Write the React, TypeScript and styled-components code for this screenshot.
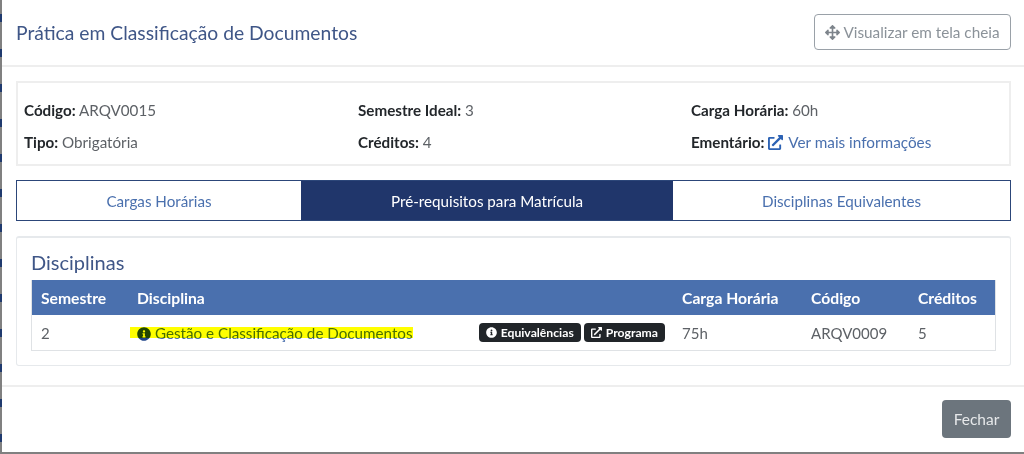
import React from "react";
import styled, { createGlobalStyle } from "styled-components";
import { FaArrowsAlt, FaExternalLinkAlt, FaInfoCircle } from "react-icons/fa";

const Global = createGlobalStyle`
  html, body { margin: 0; padding: 0; overflow: hidden; }
  body { font-family: "Lato", "Open Sans", sans-serif; }
  * { box-sizing: border-box; }
`;

const Page = styled.div`
  width: 1024px;
  height: 454px;
  padding: 0 0 2px 2px;
  background: repeating-linear-gradient(180deg, #808080 0 14px, #1f3a6e 14px 22px, #808080 22px 35px);
`;

const Modal = styled.div`
  height: 452px;
  background: #fff;
  display: flex;
  flex-direction: column;
`;

const Header = styled.header`
  height: 67px;
  padding: 14px 13px 0 14px;
  border-bottom: 2px solid #eeeeee;
  display: flex;
  justify-content: space-between;
  align-items: flex-start;
`;

const Title = styled.h1`
  margin: 0;
  padding-top: 6px;
  font-size: 19.3px;
  line-height: 26px;
  font-weight: 400;
  color: #3f5687;
`;

const OutlineButton = styled.button`
  width: 197px;
  height: 36px;
  display: flex;
  align-items: center;
  justify-content: center;
  gap: 3px;
  background: #fff;
  border: 1px solid #9aa1a8;
  border-radius: 4px;
  font: 400 15.3px "Lato", sans-serif;
  color: #8b9299;
  padding: 0;
  svg { width: 15px; height: 15px; color: #7d848b; }
`;

const Body = styled.div`
  padding: 14px 13px 0 14px;
  display: flex;
  flex-direction: column;
`;

const InfoCard = styled.section`
  height: 85px;
  border: 2px solid #eeeeee;
  padding: 11px 6px 0;
  display: grid;
  grid-template-columns: 334px 333px 1fr;
  grid-auto-rows: 32px;
  align-items: center;
`;

const Field = styled.div`
  font-size: 15.2px;
  color: #5d6166;
  white-space: nowrap;
  b { color: #23272b; font-weight: 700; }
`;

const InfoLink = styled.a`
  color: #4a70ae;
  font-size: 15.3px;
  svg { width: 15px; height: 15px; vertical-align: -2px; color: #2c62b4; margin-right: 5px; }
`;

const Tabs = styled.nav`
  margin-top: 14px;
  height: 41px;
  display: grid;
  grid-template-columns: 284px 372px 1fr;
  border: 1px solid #2c4679;
`;

const Tab = styled.div<{ $active?: boolean }>`
  display: flex;
  align-items: center;
  justify-content: center;
  font-size: 15.2px;
  color: ${(p) => (p.$active ? "#fff" : "#4a70ae")};
  background: ${(p) => (p.$active ? "#20366b" : "#fff")};
`;

const Panel = styled.section`
  margin-top: 15px;
  height: 130px;
  border: 1px solid #e6e9ec;
  border-top-width: 2px;
  border-radius: 3px;
  padding: 13px 14px 0;
`;

const PanelTitle = styled.h2`
  margin: 0 0 6px;
  font-size: 20px;
  line-height: 23px;
  font-weight: 400;
  color: #3f5687;
`;

const Table = styled.div`
  width: 965px;
  border: 1px solid #dfe2e5;
  border-top: 0;
`;

const Row = styled.div<{ $head?: boolean }>`
  height: 35px;
  display: grid;
  grid-template-columns: 96px 545px 129px 107px 1fr;
  align-items: center;
  padding-left: 9px;
  font-size: ${(p) => (p.$head ? "15.7px" : "15px")};
  color: ${(p) => (p.$head ? "#fff" : "#5d6166")};
  font-weight: ${(p) => (p.$head ? 700 : 400)};
  background: ${(p) => (p.$head ? "#4a70ae" : "#fff")};
`;

const DisciplineCell = styled.div`
  display: flex;
  align-items: center;
  justify-content: space-between;
  padding-right: 17px;
`;

const Marked = styled.span`
  position: relative;
  display: inline-flex;
  align-items: center;
  gap: 4px;
  color: #4a70ae;
  white-space: nowrap;
  font-size: 15.2px;
  svg { width: 14px; height: 14px; color: #20468a; transform: translateY(1px); }
`;

const Highlight = styled.i`
  position: absolute;
  left: -7px;
  right: 0;
  top: 3px;
  bottom: 4px;
  background: #ffff00;
  mix-blend-mode: multiply;
`;

const Badges = styled.div`
  display: flex;
  gap: 3px;
`;

const Badge = styled.span`
  height: 19px;
  padding: 0 7px;
  display: inline-flex;
  align-items: center;
  gap: 4px;
  background: #212529;
  border-radius: 4px;
  color: #fff;
  font-size: 12.2px;
  font-weight: 700;
  svg { width: 11px; height: 11px; }
`;

const Footer = styled.footer`
  margin-top: 19px;
  border-top: 2px solid #eeeeee;
  padding: 13px 13px 0 14px;
  display: flex;
  justify-content: flex-end;
`;

const CloseButton = styled.button`
  width: 69px;
  height: 38px;
  background: #6c757d;
  border: 0;
  border-radius: 4px;
  color: #e6e8ea;
  font: 400 15.5px "Lato", sans-serif;
`;

export default function App() {
  return (
    <Page>
      <Global />
      <Modal>
        <Header>
          <Title>Prática em Classificação de Documentos</Title>
          <OutlineButton><FaArrowsAlt />Visualizar em tela cheia</OutlineButton>
        </Header>
        <Body>
          <InfoCard>
            <Field><b>Código:</b> ARQV0015</Field>
            <Field><b>Semestre Ideal:</b> 3</Field>
            <Field><b>Carga Horária:</b> 60h</Field>
            <Field><b>Tipo:</b> Obrigatória</Field>
            <Field><b>Créditos:</b> 4</Field>
            <Field><b>Ementário:</b> <InfoLink><FaExternalLinkAlt />Ver mais informações</InfoLink></Field>
          </InfoCard>
          <Tabs>
            <Tab>Cargas Horárias</Tab>
            <Tab $active>Pré-requisitos para Matrícula</Tab>
            <Tab>Disciplinas Equivalentes</Tab>
          </Tabs>
          <Panel>
            <PanelTitle>Disciplinas</PanelTitle>
            <Table>
              <Row $head>
                <div>Semestre</div>
                <div>Disciplina</div>
                <div>Carga Horária</div>
                <div>Código</div>
                <div>Créditos</div>
              </Row>
              <Row>
                <div>2</div>
                <DisciplineCell>
                  <Marked>
                    <FaInfoCircle />Gestão e Classificação de Documentos
                    <Highlight />
                  </Marked>
                  <Badges>
                    <Badge><FaInfoCircle />Equivalências</Badge>
                    <Badge><FaExternalLinkAlt />Programa</Badge>
                  </Badges>
                </DisciplineCell>
                <div>75h</div>
                <div>ARQV0009</div>
                <div>5</div>
              </Row>
            </Table>
          </Panel>
        </Body>
        <Footer>
          <CloseButton>Fechar</CloseButton>
        </Footer>
      </Modal>
    </Page>
  );
}
